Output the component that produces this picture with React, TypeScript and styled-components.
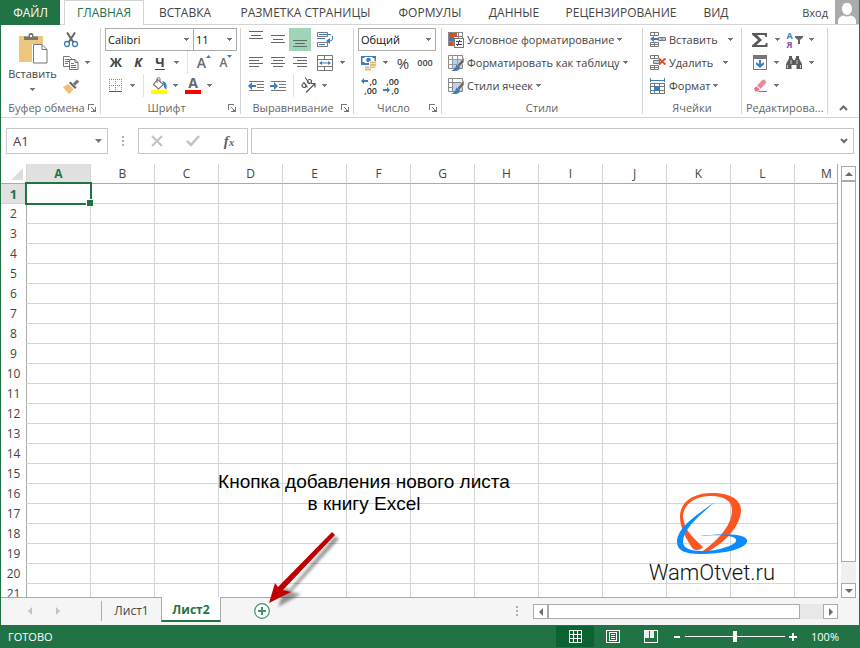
import React from "react";
import styled, { createGlobalStyle, css } from "styled-components";

const GREEN = "#217346";
const LINE = "#d4d4d4";
const EDGE = "#ababab";
const INK = "#444444";
const BLUE = "#3e7dbb";
const GRAY = "#6a6a6a";

const GlobalStyle = createGlobalStyle`
  * { box-sizing: border-box; }
  body { margin: 0; background: #fff; }
  body, button, select, input {
    font-family: "Open Sans", "Noto Sans", sans-serif;
    font-size: 12px;
    color: ${INK};
  }
  button { background: none; border: 0; padding: 0; margin: 0; cursor: pointer; }
  svg { display: block; flex: none; }
`;

/* ---------- window and tabs ---------- */

const Window = styled.div`
  display: flex;
  flex-direction: column;
  height: 100vh;
  overflow: hidden;
  border: solid ${GREEN};
  border-width: 0 1px;
  position: relative;
`;

const TabBar = styled.nav`
  display: flex;
  flex: none;
  height: 25px;
  border-bottom: 1px solid ${LINE};
`;

const FileTab = styled.button`
  width: 59px;
  height: 25px;
  margin-right: 4px;
  background: ${GREEN};
  color: #fff;
`;

const Tab = styled.button<{ $active?: boolean; $w: number }>`
  width: ${(p) => p.$w}px;
  height: 25px;
  white-space: nowrap;
  ${(p) =>
    p.$active &&
    css`
      padding-bottom: 1px;
      color: ${GREEN};
      background: #fff;
      border: 1px solid ${LINE};
      border-bottom: 0;
    `}
`;

const Account = styled.button`
  display: flex;
  align-items: center;
  gap: 7px;
  height: 24px;
  margin-left: auto;
  font-size: 11px;
`;

/* ---------- ribbon ---------- */

const Ribbon = styled.div`
  display: grid;
  grid-template-columns: 100px 140px 113px 88px 201px 99px 86px 1fr;
  flex: none;
  height: 93px;
  padding-top: 3px;
  border-bottom: 1px solid ${LINE};
  font-size: 11px;
  & button, & select { font-size: 11px; }
`;

const GroupBox = styled.section`
  display: flex;
  flex-direction: column;
  padding: 0 4px;
  height: 86px;
  border-right: 1px solid ${LINE};
`;

const GroupBody = styled.div`
  display: grid;
  grid-template-rows: repeat(3, 23px);
`;

const GroupFooter = styled.div`
  display: flex;
  align-items: center;
  height: 17px;
  margin-top: 3px;
  color: #666;
  white-space: nowrap;
  & > span { flex: 1; text-align: center; }
`;

const LaunchButton = styled.button`
  height: 8px;
  width: 8px;
`;

const Row = styled.div<{ $cols: string }>`
  display: grid;
  grid-template-columns: ${(p) => p.$cols};
  height: 23px;
`;

const IconButton = styled.button<{ $on?: boolean }>`
  display: flex;
  align-items: center;
  justify-content: center;
  height: 23px;
  min-width: 0;
  background: ${(p) => (p.$on ? "#9fd5b7" : "none")};
`;

const Separator = styled.span`
  width: 1px;
  height: 23px;
  background: #e1e1e1;
  justify-self: center;
`;

const Glyph = styled.span<{ $italic?: boolean; $underline?: boolean }>`
  font-size: 13px;
  line-height: 14px;
  font-weight: 700;
  font-style: ${(p) => (p.$italic ? "italic" : "normal")};
  border-bottom: 1px solid ${(p) => (p.$underline ? INK : "transparent")};
`;

const LetterBox = styled.span<{ $size: number }>`
  display: flex;
  align-items: flex-end;
  font-size: ${(p) => p.$size}px;
  line-height: 18px;
  font-weight: 600;
  color: #6a6a6a;
  & > svg { align-self: flex-start; margin-top: 1px; }
`;

const ColorMark = styled.span<{ $color: string }>`
  display: flex;
  flex-direction: column;
  align-items: center;
  justify-content: flex-end;
  width: 16px;
  height: 17px;
  border-bottom: 4px solid ${(p) => p.$color};
  font-size: 14px;
  line-height: 15px;
  font-weight: 700;
  color: #666;
`;

const Clipboard = styled.div`
  display: grid;
  grid-template-columns: 55px 22px 10px;
  height: 69px;
`;

const PasteButton = styled.button`
  display: flex;
  flex-direction: column;
  align-items: center;
  padding-top: 4px;
  line-height: 20px;
  & > svg:last-child { margin-top: 4px; }
`;

const Stack = styled.div`
  display: grid;
  grid-template-rows: repeat(3, 23px);
`;

const SelectWrap = styled.label`
  display: grid;
  grid-template-columns: 1fr 14px;
  align-items: center;
  height: 23px;
  border: 1px solid ${EDGE};
  & > select { grid-area: 1 / 1 / 2 / 3; }
  & > svg { grid-area: 1 / 2 / 2 / 3; justify-self: center; pointer-events: none; }
  & + & { border-left: 0; }
`;

const Select = styled.select`
  appearance: none;
  width: 100%;
  height: 21px;
  padding: 0 2px;
  border: 0;
  background: transparent;
  color: #111;
  outline: 0;
`;

const TextButton = styled.button<{ $gap?: number }>`
  display: flex;
  align-items: center;
  gap: 3px;
  height: 23px;
  padding-left: 2px;
  white-space: nowrap;
  & > svg:last-child { margin-left: ${(p) => p.$gap || 0}px; }
`;

const CellsBody = styled(GroupBody)`
  padding-left: 1px;
`;

const Collapse = styled.button`
  align-self: end;
  justify-self: center;
  height: 18px;
`;

/* ---------- formula bar ---------- */

const FormulaBar = styled.div`
  display: grid;
  grid-template-columns: 102px 30px 110px 1fr;
  flex: none;
  height: 46px;
  padding: 10px 5px 10px 5px;
`;

const Box = styled.div`
  display: flex;
  align-items: center;
  height: 26px;
  border: 1px solid #c6c6c6;
  background: #fff;
`;

const FxBox = styled(Box)`
  & > button { flex: 1; display: flex; justify-content: center; }
`;

const NameInput = styled.input`
  flex: 1;
  min-width: 0;
  height: 24px;
  padding: 0 6px;
  border: 0;
  outline: 0;
  background: transparent;
  font-size: 13px;
`;

const BoxButton = styled.button`
  width: 18px;
  height: 24px;
  display: flex;
  align-items: center;
  justify-content: center;
`;

const FormulaBox = styled(Box)`
  margin-left: 3px;
`;

const DotsCell = styled.span`
  display: flex;
  align-items: center;
  justify-content: center;
  height: 26px;
`;

const Fx = styled.span`
  font-family: "Liberation Serif", serif;
  font-style: italic;
  font-weight: 700;
  font-size: 15px;
  line-height: 20px;
  color: #666;
  & > small { font-size: 11px; }
`;

/* ---------- sheet ---------- */

const Workspace = styled.div`
  display: grid;
  grid-template-columns: 1fr 21px;
  flex: 1;
  min-height: 0;
`;

const SheetView = styled.div`
  overflow: hidden;
  min-width: 0;
  border: solid ${EDGE};
  border-width: 0 0 1px;
`;

const Grid = styled.table`
  table-layout: fixed;
  width: 858px;
  border-collapse: separate;
  border-spacing: 0;
`;

const RowHeadCol = styled.col`
  width: 26px;
`;

const Corner = styled.td`
  height: 20px;
  padding: 0;
  border-right: 1px solid ${LINE};
  border-bottom: 1px solid ${EDGE};
  & > svg { margin-left: auto; margin-right: 3px; }
`;

const ColHead = styled.th<{ $active: boolean }>`
  height: 20px;
  padding: 0;
  line-height: 18px;
  border-right: 1px solid ${LINE};
  border-bottom: 1px solid ${(p) => (p.$active ? GREEN : EDGE)};
  background: ${(p) => (p.$active ? "#e1e1e1" : "#fff")};
  color: ${(p) => (p.$active ? GREEN : INK)};
  font-weight: ${(p) => (p.$active ? 700 : 400)};
`;

const RowHead = styled.th<{ $active: boolean }>`
  height: 20px;
  padding: 1px 0 0;
  line-height: 18px;
  border-right: 1px solid ${EDGE};
  border-bottom: 1px solid ${(p) => (p.$active ? LINE : "#fff")};
  background: ${(p) => (p.$active ? "#e1e1e1" : "#fff")};
  color: ${(p) => (p.$active ? GREEN : INK)};
  font-weight: ${(p) => (p.$active ? 700 : 400)};
  font-size: ${(p) => (p.$active ? 13 : 12)}px;
`;

const Cell = styled.td`
  position: relative;
  height: 20px;
  padding: 0;
  border-right: 1px solid ${LINE};
  border-bottom: 1px solid ${LINE};
`;

const Selection = styled.span`
  position: absolute;
  z-index: 1;
  inset: -2px -2px -2px -2px;
  border: 2px solid ${GREEN};
  &::after {
    content: "";
    position: absolute;
    right: -3px;
    bottom: -3px;
    width: 6px;
    height: 6px;
    background: ${GREEN};
    border: solid #fff;
    border-width: 1px 0 0 1px;
  }
`;

const Clip = styled.div`
  height: 100%;
  overflow: hidden;
  border-right: 1px solid ${EDGE};
`;

const VScroll = styled.div`
  display: grid;
  grid-template-rows: 15px 1fr 21px 15px;
  width: 15px;
  margin: 2px 0 0 3px;
  background: #f0f0f0;
`;

const ScrollButton = styled.button`
  display: flex;
  align-items: center;
  justify-content: center;
  border: 1px solid ${EDGE};
  background: #fff;
`;

const ScrollThumb = styled.span`
  border: 1px solid ${EDGE};
  background: #fff;
`;

/* ---------- sheet tabs ---------- */

const SheetBar = styled.div`
  display: grid;
  grid-template-columns: 100px 60px 60px 82px 1fr 305px 21px;
  flex: none;
  height: 27px;
  background: #f5f5f5;
`;

const SheetNav = styled.div`
  display: flex;
  align-items: center;
  gap: 22px;
  height: 25px;
  padding-left: 26px;
`;

const SheetTab = styled.button<{ $active?: boolean }>`
  height: 20px;
  margin-top: 3px;
  padding-bottom: 2px;
  border-left: 1px solid ${EDGE};
  ${(p) =>
    p.$active &&
    css`
      height: 25px;
      margin-top: -1px;
      padding: 2px 0 0;
      background: #fff;
      color: ${GREEN};
      font-weight: 700;
      border-right: 1px solid ${EDGE};
      border-bottom: 2px solid ${GREEN};
      z-index: 1;
    `}
`;

const AddSheet = styled.button`
  display: flex;
  align-items: center;
  justify-content: center;
  height: 26px;
`;

const BarDots = styled.span`
  display: flex;
  align-items: center;
  justify-content: flex-end;
  height: 26px;
  padding-right: 15px;
`;

const HScroll = styled.div`
  display: grid;
  grid-template-columns: 15px 1fr 23px 15px;
  height: 15px;
  margin-top: 6px;
  background: #e8e8e8;
`;

/* ---------- status bar ---------- */

const StatusBar = styled.footer`
  display: flex;
  align-items: center;
  flex: none;
  height: 23px;
  padding: 0 20px 0 7px;
  background: ${GREEN};
  color: #fff;
  font-size: 11px;
  & > :first-child { flex: 1; }
`;

const Views = styled.div`
  display: flex;
  margin-right: 3px;
`;

const ViewButton = styled.button<{ $on?: boolean }>`
  display: flex;
  align-items: center;
  justify-content: center;
  width: 38px;
  height: 21px;
  background: ${(p) => (p.$on ? "#0a6332" : "none")};
`;

const ZoomRange = styled.input`
  appearance: none;
  width: 100px;
  height: 13px;
  margin: 0 4px;
  background: linear-gradient(#fff, #fff) center / 100% 1px no-repeat;
  &::-webkit-slider-thumb {
    appearance: none;
    width: 4px;
    height: 11px;
    background: #fff;
  }
`;

const ZoomButton = styled.button`
  display: flex;
  align-items: center;
  height: 20px;
`;

const ZoomValue = styled.span`
  width: 42px;
  text-align: right;
`;

/* ---------- notes over the sheet ---------- */

const Callout = styled.p`
  position: absolute;
  left: 211px;
  bottom: 133px;
  width: 304px;
  margin: 0;
  text-align: center;
  font-family: "Liberation Sans", Arial, sans-serif;
  font-size: 19px;
  line-height: 22px;
  color: #000;
`;

const CalloutArrow = styled.svg`
  position: absolute;
  left: 258px;
  bottom: 29px;
  z-index: 2;
`;

const Brand = styled.div`
  position: absolute;
  right: 84px;
  bottom: 62px;
  display: flex;
  flex-direction: column;
  align-items: center;
  gap: 5px;
  font-family: Roboto, sans-serif;
  font-weight: 300;
  font-size: 22px;
  line-height: 26px;
  color: #111;
`;

/* ---------- drawings ---------- */

const Caret = ({ color = "#777" }: { color?: string }) => (
  <svg width="5" height="3" viewBox="0 0 5 3" shapeRendering="crispEdges">
    <path d="M0 0h5v1h-1v1h-1v1h-1v-1h-1v-1h-1z" fill={color} />
  </svg>
);

const Triangle = ({ dir }: { dir: "up" | "down" | "left" | "right" }) => {
  const d = {
    up: "M0 6L4 2L8 6z",
    down: "M0 2L4 6L8 2z",
    left: "M6 0L2 4L6 8z",
    right: "M2 0L6 4L2 8z",
  }[dir];
  return (
    <svg width="8" height="8" viewBox="0 0 8 8">
      <path d={d} fill="#6a6a6a" />
    </svg>
  );
};

const PaleTriangle = ({ dir }: { dir: "left" | "right" }) => (
  <svg width="6" height="8" viewBox="0 0 6 8">
    <path d={dir === "left" ? "M5 0L1 4L5 8z" : "M1 0L5 4L1 8z"} fill="#c3c3c3" />
  </svg>
);

const Dots = () => (
  <svg width="2" height="10" viewBox="0 0 2 10" shapeRendering="crispEdges">
    <path d="M0 0h2v2h-2zM0 4h2v2h-2zM0 8h2v2h-2z" fill="#b0b0b0" />
  </svg>
);

const Launcher = () => (
  <svg width="8" height="8" viewBox="0 0 8 8" shapeRendering="crispEdges">
    <path d="M0 0h6v1H1v5H0zM3 3h1v1H3zM4 4h1v1H4zM5 5h1v1H5zM7 3h1v5H3V7h4zM5 6h2v1H5z" fill="#777" />
  </svg>
);

const PasteIcon = () => (
  <svg width="30" height="32" viewBox="0 0 30 32">
    <rect x="1" y="4" width="24" height="26" fill="#EEC77F" />
    <path d="M6 8V4.500h4.500V2.500a2 2 0 0 1 2-1.500h1a2 2 0 0 1 2 1.500V4.500H20V8z" fill="#777" />
    <rect x="12" y="3" width="2" height="2" fill="#fff" />
    <path d="M14 12h11l5 5v15H14z" fill="#fff" />
    <path d="M15.500 12.500h8.500l5 5v13.500h-13.500z M24 12.500v5h5" fill="#fff" stroke="#777" />
  </svg>
);

const CutIcon = () => (
  <svg width="16" height="16" viewBox="0 0 16 16" fill="none">
    <path d="M4 0.500L10.500 10.500M12 0.500L5.500 10.500" stroke="#666" strokeWidth="2" />
    <circle cx="4" cy="12" r="2.500" stroke={BLUE} strokeWidth="1.300" />
    <circle cx="12" cy="12" r="2.500" stroke={BLUE} strokeWidth="1.300" />
  </svg>
);

const CopyIcon = () => (
  <svg width="16" height="16" viewBox="0 0 16 16" fill="none" stroke="#777">
    <path d="M0.500 1.500h6l2 2v8h-8z" fill="#fff" />
    <path d="M2 4.500h4M2 6.500h4M2 8.500h3" stroke={BLUE} />
    <path d="M6.500 4.500h5.500l3 3v7h-8.500z" fill="#fff" />
    <path d="M12 4.500v3h3" />
    <path d="M8 8.500h3M8 10.500h5M8 12.500h5" stroke={BLUE} />
  </svg>
);

const BrushIcon = () => (
  <svg width="17" height="16" viewBox="0 0 17 16">
    <path d="M0 9l5-3 5.500 5L7 15.500H5z" fill="#EEC077" />
    <path d="M6 5l1.500-1.500 6 6L12 11z" fill="#666" />
    <path d="M10 5.500L14 1.500l2.200 2.200-4.200 4z" fill="#777" />
  </svg>
);

const BorderIcon = () => (
  <svg width="14" height="14" viewBox="0 0 14 14" shapeRendering="crispEdges">
    <path d="M0.500 0v12M6.500 0v12M12.500 0v12M0 0.500h13M0 6.500h13" stroke="#888" strokeDasharray="1 1" fill="none" />
    <path d="M0 12.500h13" stroke="#555" />
  </svg>
);

const BucketIcon = () => (
  <svg width="16" height="13" viewBox="0 0 16 13">
    <path d="M6.500 2.500l6 5-5 4.500-5-4.500z" fill="#fff" stroke="#777" strokeWidth="1.200" />
    <path d="M6 6V2a1.500 1.500 0 0 1 3 0v3" fill="none" stroke="#777" />
    <path d="M11 4q4 0.500 4.500 3.500v5q-3-1-2.500-5z" fill={BLUE} />
  </svg>
);

const SizeMark = ({ up }: { up?: boolean }) => (
  <svg width="5" height="3" viewBox="0 0 5 3">
    <path d={up ? "M0 3L2.500 0L5 3z" : "M0 0L2.500 3L5 0z"} fill={BLUE} />
  </svg>
);

const AlignIcon = ({ kind }: { kind: "top" | "middle" | "bottom" | "left" | "center" | "right" }) => {
  const d = {
    top: "M1 0.500h14M3 4.500h10M1 7.500h14",
    middle: "M1 4.500h14M3 8.500h10M1 11.500h14",
    bottom: "M1 9.500h14M3 12.500h10M1 15.500h14",
    left: "M1 3.500h14M1 6.500h10M1 9.500h14M1 12.500h10",
    center: "M1 3.500h14M3 6.500h10M1 9.500h14M3 12.500h10",
    right: "M1 3.500h14M5 6.500h10M1 9.500h14M5 12.500h10",
  }[kind];
  return (
    <svg width="16" height="17" viewBox="0 0 16 17" shapeRendering="crispEdges">
      <path d={d} stroke="#666" fill="none" />
    </svg>
  );
};

const WrapIcon = () => (
  <svg width="17" height="16" viewBox="0 0 17 16" fill="none">
    <path d="M0.500 0.500h10v4h-10zM0.500 10.500h10v4h-10z" stroke="#777" />
    <path d="M2 2.500h12M0 6.500h8" stroke={BLUE} />
    <path d="M2 12.500h6" stroke={BLUE} />
    <path d="M15.500 4v3q0 2-3 2h-1" stroke={BLUE} />
    <path d="M9 9l4-3v6z" fill={BLUE} />
  </svg>
);

const MergeIcon = () => (
  <svg width="16" height="16" viewBox="0 0 16 16" fill="none">
    <path d="M0.500 0.500h15v15h-15zM0.500 4.500h15M0.500 11.500h15M7.500 0.500v4M7.500 11.500v4" stroke="#777" />
    <path d="M3 8h10" stroke={BLUE} />
    <path d="M2 8l3-2v4zM14 8l-3-2v4z" fill={BLUE} />
  </svg>
);

const IndentIcon = ({ back }: { back?: boolean }) => (
  <svg width="17" height="12" viewBox="0 0 17 12">
    <path d="M1 1.500h15M9 4.500h7M9 7.500h7M1 10.500h15" stroke="#777" shapeRendering="crispEdges" />
    <path d={back ? "M0 6l4-4v3h4v2H4v3z" : "M8 6l-4-4v3H0v2h4v3z"} fill={BLUE} />
  </svg>
);

const OrientIcon = () => (
  <svg width="18" height="17" viewBox="0 0 18 17" fill="none" stroke="#555" strokeWidth="1.200">
    <circle cx="4" cy="8.500" r="2" />
    <path d="M3.500 5L7.500 10.500M5 0.500l5 6.500" />
    <circle cx="9.500" cy="4.500" r="2" />
    <path d="M6 15.500L15 6.500M11 6.500h4v4" />
  </svg>
);

const MoneyIcon = () => (
  <svg width="18" height="16" viewBox="0 0 18 16">
    <path d="M1 1h15v9H1z" fill={BLUE} />
    <path d="M2.500 3h2v-1h8v1h2v4h-2v1h-8v-1h-2z" fill="#fff" />
    <circle cx="8.500" cy="5" r="2.300" fill={BLUE} />
    <path d="M9 6h8v5.500h-2v4.500H4v-4h5z" fill="#fff" />
    <path d="M10 6.500h6v2h-6zM10 9h6v2h-6zM9.500 11.500h6v1.500h-6zM5 11.500h4v1.500h-4zM5 13.500h6v2h-6z" fill="#E9BC6C" />
  </svg>
);

const Digits = styled.span<{ $arrowLast?: boolean }>`
  display: grid;
  grid-template-columns: 7px 9px;
  grid-template-rows: 9px 9px;
  align-items: center;
  justify-items: end;
  width: 16px;
  font-size: 9px;
  line-height: 9px;
  color: #333;
  & > b { font-weight: 600; }
  & > b:${(p) => (p.$arrowLast ? "first-child" : "last-child")} { grid-column: 1 / 3; }
`;

const SmallArrow = ({ back }: { back?: boolean }) => (
  <svg width="7" height="6" viewBox="0 0 7 6">
    <path d={back ? "M0 3l3-3v2h4v2H3v2z" : "M7 3L4 0v2H0v2h4v2z"} fill={BLUE} />
  </svg>
);

const ThreeZeros = styled.span`
  font-size: 9px;
  font-weight: 600;
`;

const Percent = styled.span`
  font-size: 15px;
  line-height: 20px;
`;

const ConditionalIcon = () => (
  <svg width="16" height="16" viewBox="0 0 16 16" shapeRendering="crispEdges">
    <path d="M0.500 0.500h14v13h-14zM5.500 0v14M10.500 0v14M0 4.500h15M0 9.500h15" fill="#fff" stroke="#888" />
    <path d="M1 1h8v4H1zM1 10h4v4H1z" fill="#D8502D" />
    <path d="M1 5h5v4H1z" fill={BLUE} />
    <path d="M6.500 6.500h9v9h-9z" fill="#fff" stroke="#777" />
    <path d="M8 9h6v1H8zM8 12h6v1H8zM11 8h1v2h-1zM10 10h1v2h-1zM9 12h1v2H9z" fill="#444" />
  </svg>
);

const TableStyleIcon = ({ plain }: { plain?: boolean }) => (
  <svg width="16" height="16" viewBox="0 0 16 16">
    <path d="M0.500 0.500h14v13h-14z" fill="#fff" stroke="#888" />
    <path d="M4 4h10v9H4z" fill="#BBD3EA" />
    <path
      d={plain ? "M4.500 0v14M0 4.500h15M0 9.500h4" : "M4.500 0v14M9.500 0v14M0 4.500h15M0 9.500h15"}
      stroke={plain ? "#888" : "#999"}
    />
    <path d="M16 2v5l-4.500 5-2.500-2z" fill="#666" stroke="#fff" strokeWidth=".6" />
    <path d="M8.500 9.500l3.500 2.500q0 3.500-4 4H3q4-1.500 5.500-6.500z" fill={BLUE} />
  </svg>
);

const CellFrame = () => (
  <path d="M0.500 0.500h8v3h-8zM0.500 10.500h8v4h-8zM4.500 0v4M4.500 10v5M0 12.500h9" fill="#fff" stroke="#777" />
);

const InsertIcon = () => (
  <svg width="16" height="16" viewBox="0 0 16 16">
    <CellFrame />
    <path d="M8.500 5.500h7v3h-7zM12 5.500v3" fill="#BBD3EA" stroke="#777" />
    <path d="M0 7l4-3v2h4v2H4v2z" fill={BLUE} />
  </svg>
);

const DeleteIcon = () => (
  <svg width="16" height="16" viewBox="0 0 16 16">
    <CellFrame />
    <path d="M3.500 5.500h6v3h-6z" fill="#BBD3EA" stroke="#777" />
    <path d="M9 3.500l6.500 6M15.500 3.500l-6.500 6" stroke="#D8502D" strokeWidth="1.800" />
  </svg>
);

const FormatIcon = () => (
  <svg width="16" height="16" viewBox="0 0 16 16" shapeRendering="crispEdges">
    <path d="M0.500 0v4M14.500 0v4M1 2h13" stroke={BLUE} />
    <path d="M0.500 5.500h14v10h-14zM4.500 5v11M9.500 5v11M0 8.500h15M0 12.500h15" fill="#fff" stroke="#777" />
    <path d="M4 8h6v5H4z" fill={BLUE} />
  </svg>
);

const SumIcon = () => (
  <svg width="16" height="16" viewBox="0 0 16 16">
    <path d="M0 1h15v4h-1.500l-1-2H5l5 5-5.500 5H13l1-2h1.500v4H0v-1.500L6 8 0 2.500z" fill="#595959" />
  </svg>
);

const FillIcon = () => (
  <svg width="14" height="15" viewBox="0 0 14 15">
    <path d="M0.500 0.500h13v14h-13z" fill="#fff" stroke="#777" />
    <path d="M0 0h14v4H0z" fill="#777" />
    <path d="M6 5h2v4l3-2v2.500L7 13 3 9.500V7l3 2z" fill={BLUE} />
  </svg>
);

const EraserIcon = () => (
  <svg width="15" height="14" viewBox="0 0 15 14">
    <path d="M4 6.500L9.500 0.800q2-1 3.500 2 .3 1-.6 2L7.500 9.800z" fill="#E58A9A" />
    <path d="M3.300 7.200l3.500 3.200-1.800 2H2.500Q1 11 1 9.500z" fill="#E8758A" />
    <path d="M6 12.500h8" stroke="#777" />
  </svg>
);

const SortLetters = styled.span`
  display: grid;
  grid-template-rows: 9px 9px;
  font-size: 9px;
  line-height: 9px;
  font-weight: 700;
  color: ${BLUE};
  & > i { font-style: normal; color: #8e4bb0; }
`;

const SortIcon = styled.span`
  display: flex;
  align-items: center;
  gap: 2px;
`;

const FunnelIcon = () => (
  <svg width="8" height="8" viewBox="0 0 8 8">
    <path d="M0 0h8v1.500L5 4v4H3V4L0 1.500z" fill="#666" />
  </svg>
);

const FindIcon = () => (
  <svg width="16" height="14" viewBox="0 0 16 14">
    <path d="M3 0h3v2.500h1V4h2V2.500h1V0h3v2.500l3 5.500v5h-5.500V9h-5v4H0V8l3-5.500z" fill="#5c5c5c" />
    <path d="M1.500 9v3M14.500 9v3M5 4v4M11 4v4" stroke="#fff" strokeWidth=".7" />
  </svg>
);

const AvatarIcon = () => (
  <svg width="24" height="24" viewBox="0 0 24 24">
    <rect width="24" height="24" fill="#ababab" />
    <path d="M12 3c3 0 5 2 5 5.500S14.800 15 12 15 7 12 7 8.500 9 3 12 3z" fill="#fff" />
    <path d="M3 24v-2.500Q3 16.500 8.500 15.500q3.500 2 7 0Q21 16.500 21 21.500V24z" fill="#fff" />
  </svg>
);

const ChevronUp = () => (
  <svg width="9" height="6" viewBox="0 0 9 6">
    <path d="M1 5l3.500-3.500L8 5" stroke={GRAY} strokeWidth="2" fill="none" />
  </svg>
);

const ChevronDown = () => (
  <svg width="8" height="6" viewBox="0 0 8 6">
    <path d="M1 1l3 3 3-3" stroke={GRAY} strokeWidth="2" fill="none" />
  </svg>
);

const CancelIcon = () => (
  <svg width="12" height="12" viewBox="0 0 12 12">
    <path d="M1 1l10 10M11 1L1 11" stroke="#c3c3c3" strokeWidth="2" />
  </svg>
);

const EnterIcon = () => (
  <svg width="14" height="12" viewBox="0 0 14 12">
    <path d="M1 6l4 4 8-9" stroke="#c3c3c3" strokeWidth="2.500" fill="none" />
  </svg>
);

const AddIcon = () => (
  <svg width="16" height="16" viewBox="0 0 16 16" fill="none">
    <circle cx="8" cy="8" r="7.300" stroke="#439467" strokeWidth="1.200" fill="#fff" />
    <path d="M4 8h8M8 4v8" stroke="#439467" strokeWidth="2" />
  </svg>
);

const NormalViewIcon = () => (
  <svg width="13" height="13" viewBox="0 0 13 13" shapeRendering="crispEdges">
    <path d="M0.500 0.500h12v12h-12zM4.500 0v13M8.500 0v13M0 4.500h13M0 8.500h13" stroke="#fff" fill="none" />
  </svg>
);

const PageViewIcon = () => (
  <svg width="14" height="13" viewBox="0 0 14 13" shapeRendering="crispEdges">
    <path d="M0.500 0.500h13v12h-13zM3.500 2.500h7v8h-7zM5 4.500h4M5 6.500h4M5 8.500h4" stroke="#fff" fill="none" />
  </svg>
);

const BreakViewIcon = () => (
  <svg width="14" height="13" viewBox="0 0 14 13" shapeRendering="crispEdges">
    <path d="M0.500 0.500h13v12h-13z" stroke="#fff" fill="none" />
    <path d="M1 1h4v7H1zM6 1h4v7H6z" fill="#e5f1ea" />
  </svg>
);

const PlusMark = ({ minus }: { minus?: boolean }) => (
  <svg width="8" height="8" viewBox="0 0 8 8" shapeRendering="crispEdges">
    <path d={minus ? "M1 3h6v2H1z" : "M3 0h2v3h3v2H5v3H3V5H0V3h3z"} fill="#fff" />
  </svg>
);

const BrandMark = () => (
  <svg width="72" height="62" viewBox="0 0 72 62">
    <path
      d="M17 56C10 46 4 35 4 24C4 8 18 0 36 0C55 0 65 7 65 17C65 33 48 50 33 58L27 58C43 46 56 32 56 17C56 8 48 3 35 3C18 3 7 12 7 24C8 36 16 44 27 54C25 57 20 58 17 56z"
      fill="#FF5521"
    />
    <path
      d="M39 9C20 22 1 35 1 49C1 58 10 61 24 61C45 61 68 57 71 49C73 43 60 41 48 41.500C38 41.500 30 42 24 43C38 42 50 42 57 44C64 47 58 52 50 54C42 57 34 58 26 58C14 58 7 55 7 49C7 36 24 22 39 9z"
      fill="#0A8CFF"
    />
  </svg>
);

/* ---------- page parts ---------- */

const Icon = ({ label, on, children }: { label: string; on?: boolean; children: React.ReactNode }) => (
  <IconButton type="button" aria-label={label} aria-pressed={on} $on={on}>
    {children}
  </IconButton>
);

const More = ({ label }: { label: string }) => (
  <Icon label={label}>
    <Caret />
  </Icon>
);

const Group = ({ title, launcher, children }: { title: string; launcher?: boolean; children: React.ReactNode }) => (
  <GroupBox aria-label={title}>
    {children}
    <GroupFooter>
      <span>{title}</span>
      {launcher && (
        <LaunchButton type="button" aria-label={`${title}: параметры`}>
          <Launcher />
        </LaunchButton>
      )}
    </GroupFooter>
  </GroupBox>
);

const Dropdown = ({ label, value }: { label: string; value: string }) => (
  <SelectWrap>
    <Select aria-label={label} defaultValue={value}>
      <option>{value}</option>
    </Select>
    <Caret />
  </SelectWrap>
);

const TABS = [
  { name: "ГЛАВНАЯ", w: 80, active: true },
  { name: "ВСТАВКА", w: 82 },
  { name: "РАЗМЕТКА СТРАНИЦЫ", w: 159 },
  { name: "ФОРМУЛЫ", w: 90 },
  { name: "ДАННЫЕ", w: 78 },
  { name: "РЕЦЕНЗИРОВАНИЕ", w: 136 },
  { name: "ВИД", w: 54 },
];

const COLUMNS = "ABCDEFGHIJKLM".split("");
const ROWS = Array.from({ length: 21 }, (_, i) => i + 1);

export default function App() {
  return (
    <>
      <GlobalStyle />
      <Window>
        <TabBar>
          <FileTab type="button">ФАЙЛ</FileTab>
          {TABS.map((t) => (
            <Tab key={t.name} type="button" $w={t.w} $active={t.active}>
              {t.name}
            </Tab>
          ))}
          <Account type="button">
            Вход
            <AvatarIcon />
          </Account>
        </TabBar>

        <Ribbon>
          <Group title="Буфер обмена" launcher>
            <Clipboard>
              <PasteButton type="button">
                <PasteIcon />
                Вставить
                <Caret />
              </PasteButton>
              <Stack>
                <Icon label="Вырезать"><CutIcon /></Icon>
                <Icon label="Копировать"><CopyIcon /></Icon>
                <Icon label="Формат по образцу"><BrushIcon /></Icon>
              </Stack>
              <Stack>
                <span />
                <More label="Копировать: варианты" />
              </Stack>
            </Clipboard>
          </Group>

          <Group title="Шрифт" launcher>
            <GroupBody>
              <Row $cols="89px 43px">
                <Dropdown label="Шрифт" value="Calibri" />
                <Dropdown label="Размер шрифта" value="11" />
              </Row>
              <Row $cols="22px 22px 22px 11px 10px 24px 20px">
                <Icon label="Полужирный"><Glyph>Ж</Glyph></Icon>
                <Icon label="Курсив"><Glyph $italic>К</Glyph></Icon>
                <Icon label="Подчеркнутый"><Glyph $underline>Ч</Glyph></Icon>
                <More label="Подчеркивание: варианты" />
                <Separator />
                <Icon label="Увеличить шрифт"><LetterBox $size={14}>A<SizeMark up /></LetterBox></Icon>
                <Icon label="Уменьшить шрифт"><LetterBox $size={12}>A<SizeMark /></LetterBox></Icon>
              </Row>
              <Row $cols="22px 11px 10px 22px 11px 24px 9px">
                <Icon label="Границы"><BorderIcon /></Icon>
                <More label="Границы: варианты" />
                <Separator />
                <Icon label="Цвет заливки"><ColorMark $color="#ffff00"><BucketIcon /></ColorMark></Icon>
                <More label="Заливка: варианты" />
                <Icon label="Цвет текста"><ColorMark $color="#ff0000">A</ColorMark></Icon>
                <More label="Цвет текста: варианты" />
              </Row>
            </GroupBody>
          </Group>

          <Group title="Выравнивание" launcher>
            <GroupBody>
              <Row $cols="22px 22px 22px 28px">
                <Icon label="По верхнему краю"><AlignIcon kind="top" /></Icon>
                <Icon label="По середине"><AlignIcon kind="middle" /></Icon>
                <Icon label="По нижнему краю" on><AlignIcon kind="bottom" /></Icon>
                <Icon label="Перенести текст"><WrapIcon /></Icon>
              </Row>
              <Row $cols="22px 22px 22px 28px 6px">
                <Icon label="По левому краю"><AlignIcon kind="left" /></Icon>
                <Icon label="По центру"><AlignIcon kind="center" /></Icon>
                <Icon label="По правому краю"><AlignIcon kind="right" /></Icon>
                <Icon label="Объединить"><MergeIcon /></Icon>
                <More label="Объединить: варианты" />
              </Row>
              <Row $cols="22px 22px 9px 22px 8px">
                <Icon label="Уменьшить отступ"><IndentIcon back /></Icon>
                <Icon label="Увеличить отступ"><IndentIcon /></Icon>
                <Separator />
                <Icon label="Ориентация"><OrientIcon /></Icon>
                <More label="Ориентация: варианты" />
              </Row>
            </GroupBody>
          </Group>

          <Group title="Число" launcher>
            <GroupBody>
              <Row $cols="78px">
                <Dropdown label="Числовой формат" value="Общий" />
              </Row>
              <Row $cols="22px 10px 26px 18px">
                <Icon label="Финансовый формат"><MoneyIcon /></Icon>
                <More label="Финансовый формат: варианты" />
                <Icon label="Процентный формат"><Percent>%</Percent></Icon>
                <Icon label="Формат с разделителями"><ThreeZeros>000</ThreeZeros></Icon>
              </Row>
              <Row $cols="22px 22px">
                <Icon label="Увеличить разрядность">
                  <Digits><SmallArrow back /><b>,0</b><b>,00</b></Digits>
                </Icon>
                <Icon label="Уменьшить разрядность">
                  <Digits $arrowLast><b>,00</b><SmallArrow /><b>,0</b></Digits>
                </Icon>
              </Row>
            </GroupBody>
          </Group>

          <Group title="Стили">
            <GroupBody>
              <TextButton type="button"><ConditionalIcon />Условное форматирование<Caret /></TextButton>
              <TextButton type="button"><TableStyleIcon />Форматировать как таблицу<Caret /></TextButton>
              <TextButton type="button"><TableStyleIcon plain />Стили ячеек<Caret /></TextButton>
            </GroupBody>
          </Group>

          <Group title="Ячейки">
            <CellsBody>
              <TextButton type="button" $gap={7}><InsertIcon />Вставить<Caret /></TextButton>
              <TextButton type="button" $gap={7}><DeleteIcon />Удалить<Caret /></TextButton>
              <TextButton type="button"><FormatIcon />Формат<Caret /></TextButton>
            </CellsBody>
          </Group>

          <Group title="Редактирова...">
            <GroupBody>
              <Row $cols="28px 6px 29px 5px">
                <Icon label="Сумма"><SumIcon /></Icon>
                <More label="Сумма: варианты" />
                <Icon label="Сортировка и фильтр">
                  <SortIcon><SortLetters>А<i>Я</i></SortLetters><FunnelIcon /></SortIcon>
                </Icon>
                <More label="Сортировка: варианты" />
              </Row>
              <Row $cols="28px 5px 30px 5px">
                <Icon label="Заполнить"><FillIcon /></Icon>
                <More label="Заполнить: варианты" />
                <Icon label="Найти и выделить"><FindIcon /></Icon>
                <More label="Найти: варианты" />
              </Row>
              <Row $cols="28px 5px">
                <Icon label="Очистить"><EraserIcon /></Icon>
                <More label="Очистить: варианты" />
              </Row>
            </GroupBody>
          </Group>

          <Collapse type="button" aria-label="Свернуть ленту"><ChevronUp /></Collapse>
        </Ribbon>

        <FormulaBar>
          <Box>
            <NameInput aria-label="Имя ячейки" defaultValue="A1" />
            <BoxButton type="button" aria-label="Список имен">
              <svg width="7" height="4" viewBox="0 0 7 4"><path d="M0 0h7L3.500 4z" fill="#777" /></svg>
            </BoxButton>
          </Box>
          <DotsCell><Dots /></DotsCell>
          <FxBox>
            <button type="button" aria-label="Отмена"><CancelIcon /></button>
            <button type="button" aria-label="Ввод"><EnterIcon /></button>
            <button type="button" aria-label="Вставить функцию"><Fx>f<small>x</small></Fx></button>
          </FxBox>
          <FormulaBox>
            <NameInput aria-label="Строка формул" />
            <BoxButton type="button" aria-label="Развернуть строку формул"><ChevronDown /></BoxButton>
          </FormulaBox>
        </FormulaBar>

        <Workspace>
          <SheetView>
            <Clip>
              <Grid>
                <colgroup>
                  <RowHeadCol />
                </colgroup>
                <thead>
                  <tr>
                    <Corner>
                      <svg width="12" height="12" viewBox="0 0 12 12"><path d="M12 0v12H0z" fill="#dcdcdc" /></svg>
                    </Corner>
                    {COLUMNS.map((c) => (
                      <ColHead key={c} scope="col" $active={c === "A"}>{c}</ColHead>
                    ))}
                  </tr>
                </thead>
                <tbody>
                  {ROWS.map((r) => (
                    <tr key={r}>
                      <RowHead scope="row" $active={r === 1}>{r}</RowHead>
                      {COLUMNS.map((c) => (
                        <Cell key={c}>{r === 1 && c === "A" && <Selection />}</Cell>
                      ))}
                    </tr>
                  ))}
                </tbody>
              </Grid>
            </Clip>
          </SheetView>
          <VScroll>
            <ScrollButton type="button" aria-label="Вверх"><Triangle dir="up" /></ScrollButton>
            <ScrollThumb />
            <span />
            <ScrollButton type="button" aria-label="Вниз"><Triangle dir="down" /></ScrollButton>
          </VScroll>
        </Workspace>

        <SheetBar>
          <SheetNav>
            <button type="button" aria-label="Предыдущий лист"><PaleTriangle dir="left" /></button>
            <button type="button" aria-label="Следующий лист"><PaleTriangle dir="right" /></button>
          </SheetNav>
          <SheetTab type="button">Лист1</SheetTab>
          <SheetTab type="button" $active>Лист2</SheetTab>
          <AddSheet type="button" aria-label="Новый лист"><AddIcon /></AddSheet>
          <BarDots><Dots /></BarDots>
          <HScroll>
            <ScrollButton type="button" aria-label="Влево"><Triangle dir="left" /></ScrollButton>
            <ScrollThumb />
            <span />
            <ScrollButton type="button" aria-label="Вправо"><Triangle dir="right" /></ScrollButton>
          </HScroll>
        </SheetBar>

        <StatusBar>
          <span>ГОТОВО</span>
          <Views>
            <ViewButton type="button" aria-label="Обычный" $on><NormalViewIcon /></ViewButton>
            <ViewButton type="button" aria-label="Разметка страницы"><PageViewIcon /></ViewButton>
            <ViewButton type="button" aria-label="Страничный"><BreakViewIcon /></ViewButton>
          </Views>
          <ZoomButton type="button" aria-label="Уменьшить"><PlusMark minus /></ZoomButton>
          <ZoomRange type="range" aria-label="Масштаб" min={0} max={200} defaultValue={100} />
          <ZoomButton type="button" aria-label="Увеличить"><PlusMark /></ZoomButton>
          <ZoomValue>100%</ZoomValue>
        </StatusBar>

        <Callout>
          Кнопка добавления нового листа
          <br />в книгу Excel
        </Callout>
        <CalloutArrow width="92" height="92" viewBox="0 0 92 92">
          <defs>
            <filter id="soft" x="-20%" y="-20%" width="150%" height="150%">
              <feGaussianBlur stdDeviation="1.800" />
            </filter>
          </defs>
          <path d="M72 4l4 3L28 60l10 2L15 75l7-20 4 3z" transform="translate(4 5)" fill="#000" opacity=".4" filter="url(#soft)" />
          <path d="M73 5l3 3L24 63l8 2L10 76l6-20 3 4z" fill="#C00000" />
        </CalloutArrow>
        <Brand>
          <BrandMark />
          WamOtvet.ru
        </Brand>
      </Window>
    </>
  );
}
